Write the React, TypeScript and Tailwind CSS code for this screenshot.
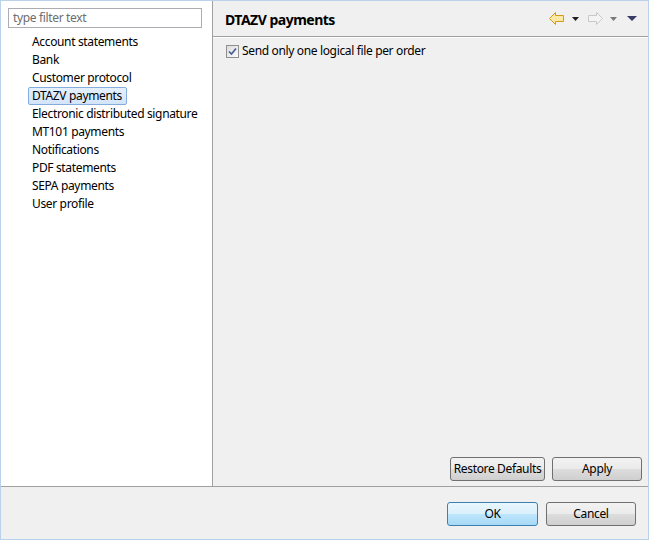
import React from 'react';

const items = [
  'Account statements',
  'Bank',
  'Customer protocol',
  'DTAZV payments',
  'Electronic distributed signature',
  'MT101 payments',
  'Notifications',
  'PDF statements',
  'SEPA payments',
  'User profile',
];

const btn =
  'h-[24px] rounded-[3px] border border-[#707070] bg-[linear-gradient(#f2f2f2_0%,#ebebeb_50%,#dddddd_50%,#cfcfcf_100%)] text-[12px] text-black flex items-center justify-center whitespace-nowrap';

const BackArrow = () => (
  <svg width="15" height="13" viewBox="0 0 15 13">
    <path d="M0.5 6.5 L6.5 0.5 L6.5 3.5 L14.5 3.5 L14.5 9.5 L6.5 9.5 L6.5 12.5 Z" fill="#fde9a6" stroke="#d39a1c" />
  </svg>
);

const ForwardArrow = () => (
  <svg width="15" height="13" viewBox="0 0 15 13">
    <path d="M14.5 6.5 L8.5 0.5 L8.5 3.5 L0.5 3.5 L0.5 9.5 L8.5 9.5 L8.5 12.5 Z" fill="#f4f4f4" stroke="#c8c8c8" />
  </svg>
);

const Tri = ({ color, w = 7, h = 4 }: { color: string; w?: number; h?: number }) => (
  <svg width={w} height={h} viewBox={`0 0 ${w} ${h}`}>
    <path d={`M0 0 L${w} 0 L${w / 2} ${h} Z`} fill={color} />
  </svg>
);

export default function App() {
  return (
    <div className="w-[649px] h-[540px] border border-[#b9d1ea] bg-[#f0f0f0] flex flex-col font-['Noto_Sans',sans-serif] text-[12px] tracking-[-0.35px] text-black whitespace-nowrap">
      <div className="flex h-[485px]">
        {/* tree side */}
        <div className="w-[212px] bg-white border-r border-[#a0a0a0] pt-[7px]">
          <div className="ml-[7px] w-[194px] h-[20px] border border-[#abadb3] flex items-center pl-[4px] text-[#6d6d6d] leading-none">
            type filter text
          </div>
          <div className="mt-[5px]">
            {items.map((it) => (
              <div key={it} className="h-[18px] flex items-center">
                <div
                  className={
                    it === 'DTAZV payments'
                      ? 'ml-[27px] h-[18px] pl-[3px] pr-[4px] flex items-center rounded-[2px] border border-[#84acdd] bg-[linear-gradient(#e6f0fc,#d3e4fa)]'
                      : 'ml-[27px] h-[18px] pl-[3px] pr-[4px] flex items-center border border-transparent'
                  }
                >
                  {it}
                </div>
              </div>
            ))}
          </div>
        </div>

        {/* page side */}
        <div className="flex-1 flex flex-col">
          <div className="h-[36px] flex items-center border-b border-[#a0a0a0] pl-[12px] pr-[11px] pt-[2px] shrink-0">
            <span className="font-bold text-[14px] tracking-[-0.5px]">DTAZV payments</span>
            <div className="ml-auto flex items-center -mt-[2px]">
              <BackArrow />
              <span className="ml-[8px]"><Tri color="#1e1e1e" /></span>
              <span className="ml-[9px]"><ForwardArrow /></span>
              <span className="ml-[7px]"><Tri color="#7a7a7a" /></span>
              <span className="ml-[10px]"><Tri color="#3b3966" w={10} h={5} /></span>
            </div>
          </div>
          <div className="border-t border-white flex-1 flex flex-col">
            <label className="mt-[4px] ml-[13px] h-[18px] flex items-center gap-[3px]">
              <span className="w-[13px] h-[13px] border border-[#8f8f8f] bg-[linear-gradient(135deg,#dcdcdc,#fbfbfb)] flex items-center justify-center">
                <svg width="9" height="9" viewBox="0 0 9 9">
                  <path d="M1 4.5 L3.5 7 L8 1.5" fill="none" stroke="#4a5f97" strokeWidth="1.7" />
                </svg>
              </span>
              <span>Send only one logical file per order</span>
            </label>
            <div className="mt-auto flex justify-end gap-[7px] pr-[6px] pb-[5px]">
              <button className={`${btn} w-[95px]`}>Restore Defaults</button>
              <button className={`${btn} w-[90px]`}>Apply</button>
            </div>
          </div>
        </div>
      </div>

      {/* dialog buttons */}
      <div className="flex-1 border-t border-[#a0a0a0] flex justify-end items-start pt-[15px] pr-[12px] gap-[8px]">
        <button className="h-[24px] w-[91px] rounded-[3px] border border-[#3c7fb1] bg-[linear-gradient(#eaf6fd_0%,#d9f0fc_50%,#bee6fd_50%,#a7d9f5_100%)] text-[12px] flex items-center justify-center">
          OK
        </button>
        <button className={`${btn} w-[90px]`}>Cancel</button>
      </div>
    </div>
  );
}
